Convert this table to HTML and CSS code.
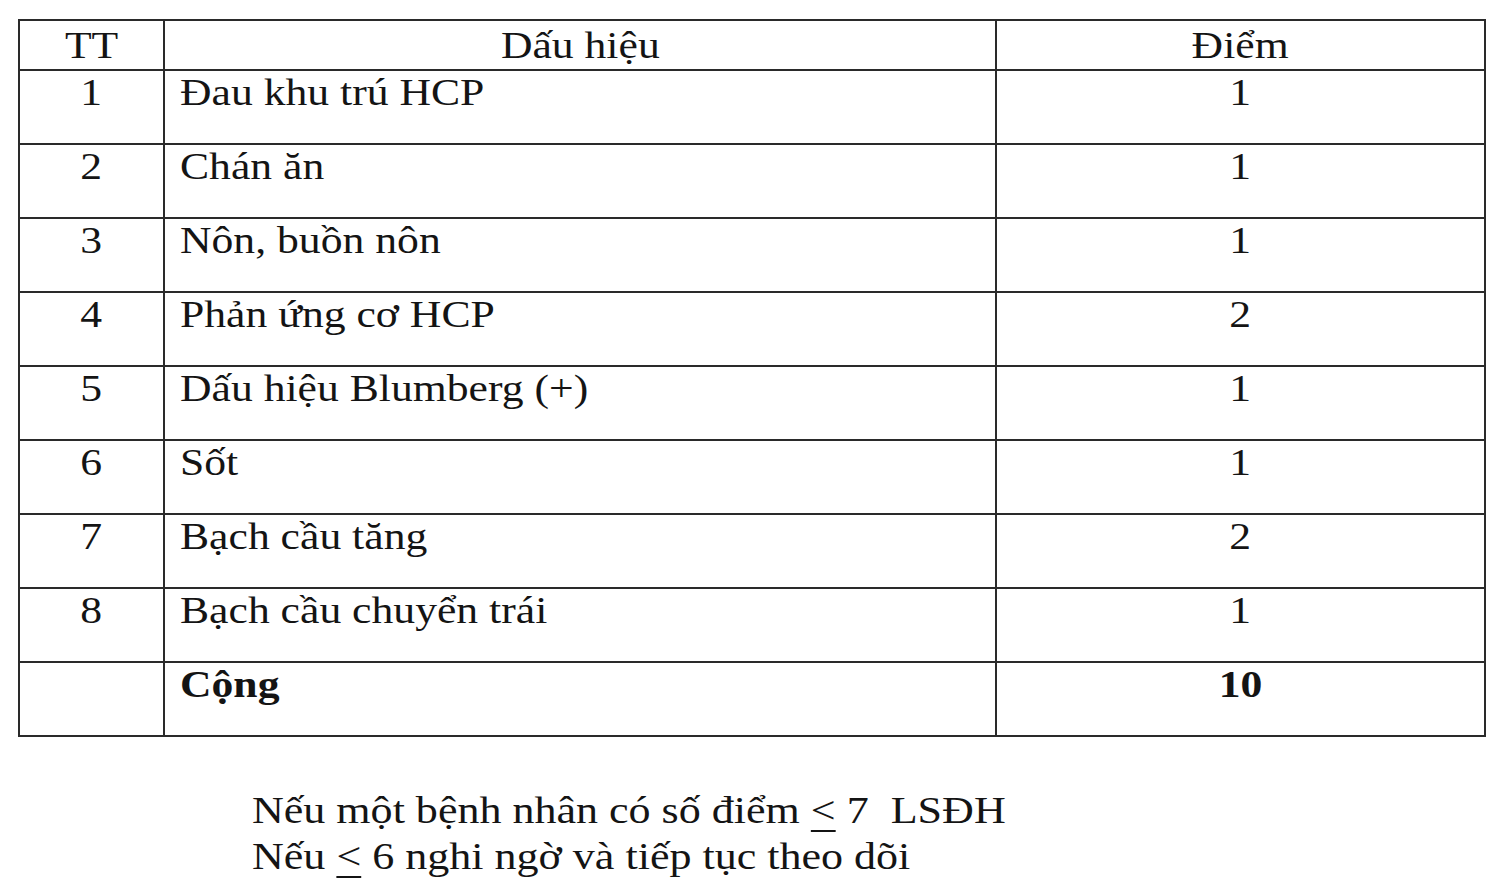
FILE: index.html
```html
<!DOCTYPE html>
<html lang="vi">
<head>
<meta charset="utf-8">
<title>Thang điểm</title>
<link rel="stylesheet" href="styles.css">
</head>
<body>
<table class="score">
  <colgroup>
    <col class="c-tt">
    <col class="c-sign">
    <col class="c-pt">
  </colgroup>
  <thead>
    <tr>
      <th class="mid"><span class="t tc">TT</span></th>
      <th class="mid"><span class="t tc">Dấu hiệu</span></th>
      <th class="mid"><span class="t tc">Điểm</span></th>
    </tr>
  </thead>
  <tbody>
    <tr><td class="mid"><span class="t tc">1</span></td><td><span class="t">Đau khu trú HCP</span></td><td class="mid"><span class="t tc">1</span></td></tr>
    <tr><td class="mid"><span class="t tc">2</span></td><td><span class="t">Chán ăn</span></td><td class="mid"><span class="t tc">1</span></td></tr>
    <tr><td class="mid"><span class="t tc">3</span></td><td><span class="t">Nôn, buồn nôn</span></td><td class="mid"><span class="t tc">1</span></td></tr>
    <tr><td class="mid"><span class="t tc">4</span></td><td><span class="t">Phản ứng cơ HCP</span></td><td class="mid"><span class="t tc">2</span></td></tr>
    <tr><td class="mid"><span class="t tc">5</span></td><td><span class="t">Dấu hiệu Blumberg (+)</span></td><td class="mid"><span class="t tc">1</span></td></tr>
    <tr><td class="mid"><span class="t tc">6</span></td><td><span class="t">Sốt</span></td><td class="mid"><span class="t tc">1</span></td></tr>
    <tr><td class="mid"><span class="t tc">7</span></td><td><span class="t">Bạch cầu tăng</span></td><td class="mid"><span class="t tc">2</span></td></tr>
    <tr><td class="mid"><span class="t tc">8</span></td><td><span class="t">Bạch cầu chuyển trái</span></td><td class="mid"><span class="t tc">1</span></td></tr>
    <tr class="total"><td class="mid"></td><td><span class="t">Cộng</span></td><td class="mid"><span class="t tc">10</span></td></tr>
  </tbody>
</table>
<div class="note">
  <p class="line"><span class="t tf">Nếu một bệnh nhân có số điểm <span class="le">&lt;</span> 7&nbsp; LSĐH</span></p>
  <p class="line"><span class="t tf">Nếu <span class="le">&lt;</span> 6 nghi ngờ và tiếp tục theo dõi</span></p>
</div>
</body>
</html>
```

FILE: styles.css
```css
html, body {
  margin: 0;
  padding: 0;
  background: #ffffff;
}

body {
  font-family: "Liberation Serif", "Times New Roman", serif;
  font-size: 37px;
  color: #141414;
  width: 1500px;
  height: 885px;
  overflow: hidden;
}

.score {
  border-collapse: collapse;
  table-layout: fixed;
  width: 1466px;
  margin: 19px 0 0 18px;
  border: 2px solid #2a2a2a;
}

.c-tt { width: 145px; }
.c-sign { width: 832px; }
.c-pt { width: 489px; }

.score th,
.score td {
  border: 2px solid #2a2a2a;
  text-align: left;
  vertical-align: top;
  font-weight: normal;
  line-height: 42px;
  white-space: nowrap;
}

.score th {
  padding: 4px 15px 2px 15px;
  height: 42px;
}

.score td {
  padding: 1px 15px 29px 15px;
  height: 42px;
}

.score .mid {
  text-align: center;
}

.t {
  display: inline-block;
  transform: scaleX(1.18);
  transform-origin: left center;
}

.t.tc {
  transform-origin: center center;
}

.t.tf {
  transform: scaleX(1.19);
}

.total td {
  font-weight: bold;
}

.note {
  margin: 51px 0 0 252px;
}

.line {
  margin: 0;
  line-height: 46px;
  white-space: nowrap;
}

.le {
  text-decoration: underline;
  text-decoration-thickness: 2px;
  text-underline-offset: 7px;
}
```
